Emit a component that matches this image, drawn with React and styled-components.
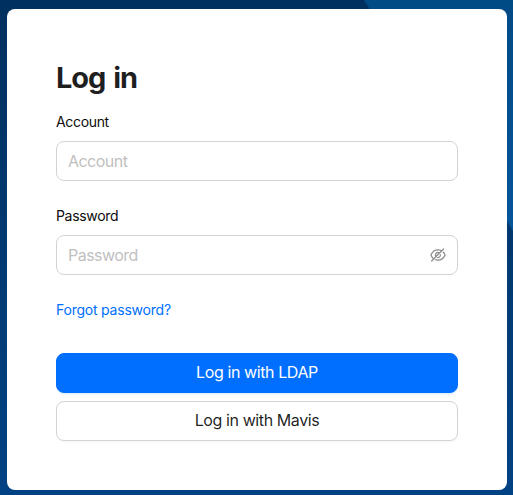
import React from "react";
import styled, { createGlobalStyle } from "styled-components";
import { AiOutlineEyeInvisible } from "react-icons/ai";

const GlobalStyle = createGlobalStyle`
  *, *::before, *::after { box-sizing: border-box; }
  body {
    margin: 0;
    overflow: hidden;
    font-family: Inter, "Liberation Sans", sans-serif;
    color: rgba(0, 0, 0, 0.88);
  }
`;

const Page = styled.main`
  position: relative;
  width: 513px;
  height: 495px;
  padding: 9px 6px 5px 7px;
  background: #003a72;
`;

const Backdrop = styled.svg`
  position: absolute;
  inset: 0;
`;

const Card = styled.form`
  position: relative;
  display: flex;
  flex-direction: column;
  height: 481px;
  padding: 50px 49px 0;
  border-radius: 8px;
  background: #fff;
`;

const Title = styled.h1`
  margin: 0 0 14px;
  font-size: 29px;
  line-height: 38px;
  font-weight: 700;
  letter-spacing: -1.05px;
  word-spacing: 2px;
`;

const Field = styled.div`
  margin-bottom: 24px;
`;

const Label = styled.label`
  display: block;
  height: 30px;
  font-size: 14px;
  line-height: 22px;
  color: #0c0c0c;
  letter-spacing: -0.33px;
`;

const InputBox = styled.div`
  display: flex;
  align-items: center;
  height: 40px;
  padding: 0 10px 0 11px;
  border: 1px solid #d3d3d3;
  border-radius: 8px;
  color: rgba(0, 0, 0, 0.45);
`;

const Input = styled.input`
  flex: 1;
  min-width: 0;
  padding: 0;
  border: 0;
  outline: 0;
  background: none;
  font: 16px/24px Inter, "Liberation Sans", sans-serif;
  letter-spacing: -0.53px;
  &::placeholder { color: #bfbfbf; opacity: 1; }
`;

const Forgot = styled.a`
  align-self: flex-start;
  font-size: 14px;
  line-height: 22px;
  letter-spacing: -0.22px;
  color: #006fff;
  text-decoration: none;
`;

const Actions = styled.div`
  display: grid;
  gap: 8px;
  margin-top: 32px;
`;

const Button = styled.button`
  height: 40px;
  padding: 0 15px 2px;
  border: 1px solid ${(p) => (p.$primary ? "#006fff" : "#d3d3d3")};
  border-radius: 8px;
  background: ${(p) => (p.$primary ? "#006fff" : "#fff")};
  color: ${(p) => (p.$primary ? "#fff" : "rgba(0, 0, 0, 0.88)")};
  box-shadow: 0 2px 0 ${(p) => (p.$primary ? "rgba(5, 145, 255, 0.1)" : "rgba(0, 0, 0, 0.02)")};
  font: 16px/24px Inter, "Liberation Sans", sans-serif;
  letter-spacing: -0.4px;
`;

export default function App() {
  return (
    <>
      <GlobalStyle />
      <Page>
        <Backdrop width="513" height="495" aria-hidden="true">
          <defs>
            <linearGradient id="base" x1="0" y1="0" x2="0" y2="1">
              <stop offset="0" stopColor="#00305e" />
              <stop offset="1" stopColor="#004284" />
            </linearGradient>
            <linearGradient id="band" x1="0" y1="0" x2="0" y2="1">
              <stop offset="0" stopColor="#004a86" />
              <stop offset="1" stopColor="#06559b" />
            </linearGradient>
          </defs>
          <rect width="513" height="495" fill="url(#base)" />
          <path d="M364 0H513V231L507 221Z" fill="url(#band)" />
          <path d="M364 0H513V9H370Z" fill="#004a86" />
        </Backdrop>
        <Card>
          <Title>Log in</Title>
          <Field>
            <Label htmlFor="account">Account</Label>
            <InputBox><Input id="account" placeholder="Account" /></InputBox>
          </Field>
          <Field>
            <Label htmlFor="password">Password</Label>
            <InputBox>
              <Input id="password" type="password" placeholder="Password" />
              <AiOutlineEyeInvisible size={18} />
            </InputBox>
          </Field>
          <Forgot href="#">Forgot password?</Forgot>
          <Actions>
            <Button type="button" $primary>Log in with LDAP</Button>
            <Button type="button">Log in with Mavis</Button>
          </Actions>
        </Card>
      </Page>
    </>
  );
}
